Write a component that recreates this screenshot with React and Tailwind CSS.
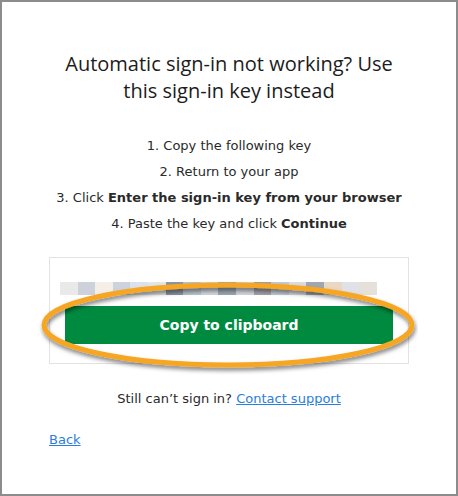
import React from "react";

const keyPixels = [
  "#e9e9e9", "#cdd2da", "#f6efe8", "#ccd3dc", "#dde2e8", "#e2e6ea",
  "#8d96a4", "#b8c2cc", "#d0d3d8", "#9aa3ae", "#cfd4da", "#a1a1a6",
  "#c3cad3", "#d9dde2", "#a0a7b1", "#ead8c2", "#dfe2e6", "#e5e0da",
];

function App() {
  return (
    <div className="w-[458px] h-[496px] border-2 border-[#8c8c8c] bg-white font-['DejaVu_Sans',sans-serif] text-[#2a2a2a]">
      <div className="px-[47px] pt-[48px]">
        <h1 className="mx-auto max-w-[340px] text-center text-[20px] leading-[27px] text-[#1c1c1c] font-['Open_Sans',sans-serif]">
          Automatic sign-in not working? Use this sign-in key instead
        </h1>

        <ol className="mt-[29px] text-center text-[13px] leading-[26px]">
          <li>1. Copy the following key</li>
          <li>2. Return to your app</li>
          <li>
            3. Click <b>Enter the sign-in key from your browser</b>
          </li>
          <li>
            4. Paste the key and click <b>Continue</b>
          </li>
        </ol>

        <div className="relative mt-[20px] h-[107px] border border-[#e3e3e3] px-[15px] pt-[24px]">
          <div className="flex h-[13px] -ml-[5px]">
            {keyPixels.map((c, i) => (
              <div key={i} className="h-full w-[17.6px]" style={{ backgroundColor: c }} />
            ))}
          </div>
          <button className="mt-[11px] flex h-[38px] w-[328px] items-center justify-center bg-[#008a40] text-[14px] font-bold text-white">
            Copy to clipboard
          </button>

          <svg
            className="pointer-events-none absolute left-[-12px] top-[21px]"
            width="380"
            height="96"
            viewBox="0 0 380 96"
          >
            <defs>
              <filter id="sh" x="-10%" y="-30%" width="120%" height="160%">
                <feDropShadow dx="1" dy="3" stdDeviation="2" floodColor="#000" floodOpacity="0.5" />
              </filter>
            </defs>
            <ellipse
              cx="190"
              cy="46"
              rx="184"
              ry="40"
              fill="none"
              stroke="#f6a623"
              strokeWidth="5"
              filter="url(#sh)"
            />
          </svg>
        </div>

        <p className="mt-[26px] text-center text-[13px] leading-[18px]">
          Still can’t sign in?{" "}
          <a href="#" className="text-[#2a7de1] underline">
            Contact support
          </a>
        </p>

        <p className="mt-[23px] text-[13px] leading-[18px]">
          <a href="#" className="text-[#2a7de1] underline">
            Back
          </a>
        </p>
      </div>
    </div>
  );
}

export default App;
